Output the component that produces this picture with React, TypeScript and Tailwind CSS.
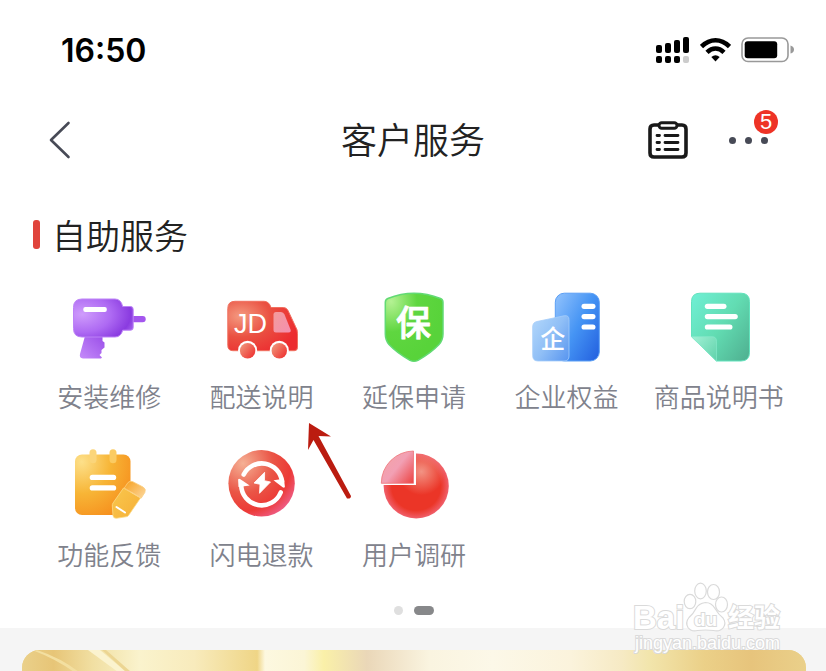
import type { ReactNode } from "react";

const CJK = "font-['Noto_Sans_CJK_SC',sans-serif]";

function Gradient({ id, colors }: { id: string; colors: string[] }) {
  return (
    <linearGradient id={id} x1="0" y1="0.1" x2="1" y2="0.9">
      {colors.map((color, i) => (
        <stop key={color} offset={i / (colors.length - 1)} stopColor={color} />
      ))}
    </linearGradient>
  );
}

function Icon({ children }: { children: ReactNode }) {
  return (
    <svg viewBox="0 0 80 80" className="size-20" aria-hidden="true">
      {children}
    </svg>
  );
}

function DrillIcon() {
  return (
    <Icon>
      <defs>
        <radialGradient id="drill" cx="0.15" cy="0.4" r="0.95">
          <stop offset="0" stopColor="#cf9cfc" />
          <stop offset="0.5" stopColor="#ae6af3" />
          <stop offset="0.85" stopColor="#8a3be0" />
          <stop offset="1" stopColor="#a866ee" />
        </radialGradient>
        <linearGradient id="drillHandle" x1="1" y1="0" x2="0" y2="1">
          <stop offset="0" stopColor="#9a4ee8" />
          <stop offset="1" stopColor="#c58bfa" />
        </linearGradient>
      </defs>
      <path
        d="M16 49h17.500v5l2 1.500v5l-3 2.500v3l-2 2 2.500 2.500-1 1H14q-4-.5-3-4.500z"
        fill="url(#drillHandle)"
      />
      <rect x="62" y="29" width="14.700" height="6.300" rx="3" fill="#a456ee" />
      <path
        d="M13 12h33q6 0 7.700 7.500h8q2.500 0 2.500 3v18q0 2.700-2.500 2.700h-8Q52 50 46 50H13q-8.500 0-8.500-8.500v-21Q4.500 12 13 12z"
        fill="url(#drill)"
        stroke="#bd83f7"
        strokeWidth="1"
      />
      <rect x="14.300" y="20" width="23.500" height="5" rx="2" fill="#fff" />
    </Icon>
  );
}

function TruckIcon() {
  return (
    <Icon>
      <defs>
        <radialGradient id="truck" cx="0.18" cy="0.3" r="0.85">
          <stop offset="0" stopColor="#f49a80" />
          <stop offset="0.5" stopColor="#ea5142" />
          <stop offset="1" stopColor="#ec2c30" />
        </radialGradient>
        <Gradient id="truckWindow" colors={["#f39b9c", "#f48fae"]} />
        <Gradient id="wheel" colors={["#f09a7e", "#ee2d2d"]} />
      </defs>
      <path
        d="M13 14.300h29q5 0 7 6.200h12.500q3 0 4.500 3l7.500 16q2 3 2 7v14q0 3.200-3.200 3.200H11q-5.200 0-5.200-5.200v-37q0-7.200 7.200-7.200z"
        fill="url(#truck)"
        stroke="#f0705f"
        strokeWidth="1"
      />
      <path
        d="M54 25h5q2.500 0 3.500 2.500l6 15q1 3-2 3H54q-2.500 0-2.500-2.500V27.500Q51.500 25 54 25z"
        fill="url(#truckWindow)"
      />
      <circle cx="25.600" cy="63.300" r="9.500" fill="#fff" />
      <circle cx="57.300" cy="63.300" r="9.500" fill="#fff" />
      <circle cx="25.600" cy="63.700" r="7.700" fill="url(#wheel)" />
      <circle cx="57.300" cy="63.700" r="7.700" fill="url(#wheel)" />
      <text
        x="12"
        y="46.300"
        fontSize="27"
        fill="#fff"
        className="font-['Liberation_Sans',sans-serif]"
      >
        JD
      </text>
    </Icon>
  );
}

function ShieldIcon() {
  return (
    <Icon>
      <defs>
        <radialGradient id="shield" cx="0.1" cy="0.12" r="0.9">
          <stop offset="0" stopColor="#b5f294" />
          <stop offset="0.5" stopColor="#5fd640" />
          <stop offset="1" stopColor="#58d33a" />
        </radialGradient>
      </defs>
      <path
        d="M40 6.200q13 0 26.500 5.300 2.500 1 2.500 4V47q0 6-4 10.500-8 8.500-21 15.800-4 2-8 0Q23 66 15 57.500 11.300 53 11.300 47V15.500q0-3 2.500-4Q27 6.200 40 6.200z"
        fill="url(#shield)"
        stroke="#62da74"
        strokeWidth="1.500"
      />
      <text
        x="39.500"
        y="49"
        textAnchor="middle"
        fontSize="35"
        fontWeight="500"
        fill="#fff"
        stroke="#fff"
        strokeWidth="0.800"
        strokeLinejoin="round"
        className={CJK}
      >
        保
      </text>
    </Icon>
  );
}

function CompanyIcon() {
  return (
    <Icon>
      <defs>
        <Gradient id="tower" colors={["#8cbffc", "#4594f4", "#2563e0"]} />
        <Gradient id="annex" colors={["#b0d6fb", "#90bff6", "#5c98f0"]} />
      </defs>
      <rect
        x="29.300"
        y="6.200"
        width="44"
        height="67.800"
        rx="9"
        fill="url(#tower)"
        stroke="#5b9ff5"
        strokeWidth="1"
      />
      <path
        d="M11 34.500l27-5.700q5-1 5 4V69q0 5-5 5H12q-5.300 0-5.300-5.300V40q0-4.700 4.300-5.500z"
        fill="url(#annex)"
        stroke="#a4cdfa"
        strokeWidth="0.800"
      />
      <text
        x="26.800"
        y="61"
        textAnchor="middle"
        fontSize="25"
        fontWeight="500"
        fill="#fff"
        className={CJK}
      >
        企
      </text>
      <g fill="#fff">
        <rect x="55.500" y="16.700" width="14" height="5.200" rx="2.600" />
        <rect x="55.500" y="27" width="14" height="5.200" rx="2.600" />
        <rect x="55.500" y="37.400" width="14" height="5.200" rx="2.600" />
      </g>
    </Icon>
  );
}

function ManualIcon() {
  return (
    <Icon>
      <defs>
        <Gradient id="manual" colors={["#6eeed2", "#62dcb2", "#50b292"]} />
        <Gradient id="manualFold" colors={["#9ff0d4", "#62d3ac"]} />
      </defs>
      <path
        d="M21 6.200h41q8.500 0 8.500 8.500V65.500q0 8.500-8.500 8.500H37.500L12.500 49.700v-35q0-8.500 8.500-8.500z"
        fill="url(#manual)"
        stroke="#62e3bd"
        strokeWidth="1"
      />
      <path
        d="M12.500 49.700H33q4.500 0 4.500 4.500v20z"
        fill="url(#manualFold)"
        stroke="#8cebce"
        strokeWidth="0.600"
      />
      <g fill="#fff">
        <rect x="25.800" y="16.700" width="21.700" height="5.200" rx="2.600" />
        <rect x="25.800" y="27" width="33" height="5.200" rx="2.600" />
        <rect x="25.800" y="37.400" width="27.700" height="5.200" rx="2.600" />
      </g>
    </Icon>
  );
}

function FeedbackIcon() {
  return (
    <Icon>
      <defs>
        <radialGradient id="pad" cx="0.12" cy="0.12" r="1.05">
          <stop offset="0" stopColor="#fde08a" />
          <stop offset="0.5" stopColor="#f7b536" />
          <stop offset="1" stopColor="#f68d1c" />
        </radialGradient>
        <Gradient id="pencil" colors={["#f9c64c", "#f6b038"]} />
        <Gradient id="eraser" colors={["#f7a324", "#fcd598"]} />
      </defs>
      <rect
        x="6"
        y="9.500"
        width="55.500"
        height="60.500"
        rx="7"
        fill="url(#pad)"
      />
      <rect x="20.500" y="4.300" width="7" height="14" rx="3.500" fill="#fbd57a" />
      <rect x="40.500" y="4.300" width="7" height="14" rx="3.500" fill="#fbcb62" />
      <rect x="20.700" y="29.700" width="26.500" height="5.400" rx="2.700" fill="#fff" />
      <rect x="20.700" y="40.200" width="26.500" height="5.400" rx="2.700" fill="#fff" />
      <path
        d="M54.500 43l17 10-12 17.500q-1 1.200-2.500 1.300l-9.500 1.500q-3 .3-3.500-2.500L43.300 61q-.2-1.500.7-3z"
        fill="url(#pencil)"
        stroke="#fbdb87"
        strokeWidth="0.800"
      />
      <path
        d="M59 37.500q2-2 4.500-1l10.500 5.500q3.500 2 1.800 5.500l-3.500 5.500-17-10z"
        fill="url(#eraser)"
        stroke="#fbcf80"
        strokeWidth="0.800"
      />
      <path d="M47.500 62l8.500 5.500" stroke="#fff" strokeWidth="2" strokeLinecap="round" />
    </Icon>
  );
}

function RefundIcon() {
  return (
    <Icon>
      <defs>
        <radialGradient id="refund" cx="0.22" cy="0.2" r="0.9">
          <stop offset="0" stopColor="#f5b094" />
          <stop offset="0.5" stopColor="#ea5546" />
          <stop offset="0.8" stopColor="#ec3a36" />
          <stop offset="1" stopColor="#ee5a80" />
        </radialGradient>
      </defs>
      <circle cx="39.600" cy="38.300" r="33.200" fill="url(#refund)" />
      <g fill="none" stroke="#fff" strokeWidth="4.600" strokeLinecap="round">
        <path d="M21.700 29.500A20.300 20.300 0 0 1 60 36.500" />
        <path d="M19.200 40A20.500 20.500 0 0 0 58.700 47.500" />
      </g>
      <path d="M51.500 35.200l10.500-1.500.9 8.300q-.8 1.200-2.300.2z" fill="#fff" />
      <path d="M16.500 42l-.4-7.500q.8-1.200 2.300-.2l9.300 6.200z" fill="#fff" />
      <path
        d="M42.600 27.300L32 38l6 1.300-.5 9L48.500 37l-6-1.300z"
        fill="#fff"
        stroke="#fff"
        strokeWidth="0.800"
        strokeLinejoin="round"
      />
    </Icon>
  );
}

function SurveyIcon() {
  return (
    <Icon>
      <defs>
        <radialGradient id="pieShine" cx="0.58" cy="0.28" r="0.36">
          <stop offset="0" stopColor="#f29384" />
          <stop offset="1" stopColor="#f29384" stopOpacity="0" />
        </radialGradient>
        <radialGradient id="pie">
          <stop offset="0" stopColor="#eb3527" />
          <stop offset="0.75" stopColor="#eb3527" />
          <stop offset="1" stopColor="#f0606c" />
        </radialGradient>
        <Gradient id="slice" colors={["#f4a3a6", "#f2a0b4", "#ed4a4a"]} />
      </defs>
      <circle cx="42.200" cy="41" r="32.600" fill="url(#pie)" />
      <circle cx="42.200" cy="41" r="32.600" fill="url(#pieShine)" />
      <path d="M42 40H5V4h37z" fill="#fff" />
      <path
        d="M39.500 38.300V6A32.500 32.300 0 0 0 7.300 38.300z"
        fill="url(#slice)"
        stroke="#ee7378"
        strokeWidth="0.800"
      />
    </Icon>
  );
}

const services = [
  { name: "安装维修", icon: <DrillIcon /> },
  { name: "配送说明", icon: <TruckIcon /> },
  { name: "延保申请", icon: <ShieldIcon /> },
  { name: "企业权益", icon: <CompanyIcon /> },
  { name: "商品说明书", icon: <ManualIcon /> },
  { name: "功能反馈", icon: <FeedbackIcon /> },
  { name: "闪电退款", icon: <RefundIcon /> },
  { name: "用户调研", icon: <SurveyIcon /> },
];

function StatusBar() {
  return (
    <div className="flex h-25 items-center justify-between pr-8 pl-[61px]">
      <span className="pt-0.5 font-['Inter',sans-serif] text-[32px] font-semibold text-black">
        16:50
      </span>
      <div className="flex items-center gap-2.5">
        <svg width="34" height="26" viewBox="0 0 34 26" aria-label="信号">
          <rect x="0" y="8" width="6" height="8" rx="2" />
          <rect x="9" y="6" width="6" height="10" rx="2" />
          <rect x="18" y="3" width="6" height="13" rx="2" />
          <rect x="27" y="0" width="6" height="16" rx="2" />
          <rect x="0" y="19" width="6" height="7" rx="2" />
          <rect x="9" y="19" width="6" height="7" rx="2" />
          <rect x="18" y="19" width="6" height="7" rx="2" />
          <rect x="27" y="19" width="6" height="7" rx="2" fill="#ccc" />
        </svg>
        <svg width="31" height="24" viewBox="0 0 31 24" aria-label="无线网络">
          <g fill="none" stroke="#000" strokeWidth="4.600">
            <path d="M1.500 8.500Q8 2.300 15.500 2.300T29.500 8.500" />
            <path d="M7 14.300q4-3.800 8.500-3.800t8.500 3.800" />
          </g>
          <path d="M11.300 19q4.200-3.300 8.400 0l-4.200 4.500z" />
        </svg>
        <svg width="53" height="26" viewBox="0 0 53 26" aria-label="电量">
          <rect
            x="1"
            y="1"
            width="46"
            height="23.500"
            rx="6"
            fill="#fff"
            stroke="#999"
            strokeWidth="1.600"
          />
          <rect x="3.700" y="4.300" width="32.500" height="17" rx="3" />
          <path d="M49.500 8.500q3.500 1 3.500 4t-3.500 4z" fill="#999" />
        </svg>
      </div>
    </div>
  );
}

function NavBar() {
  return (
    <header className="flex h-20 items-center px-14">
      <div className="flex flex-1">
        <button type="button" aria-label="返回" className="-ml-2">
          <svg width="24" height="38" viewBox="0 0 24 38" fill="none">
            <path
              d="M20.500 2L3 19l17.500 17"
              stroke="#474a56"
              strokeWidth="2.600"
              strokeLinecap="round"
              strokeLinejoin="round"
            />
          </svg>
        </button>
      </div>
      <h1 className="pb-1 text-4xl text-[#222]">客户服务</h1>
      <div className="flex flex-1 items-center justify-end gap-10">
        <button type="button" aria-label="订单">
          <svg width="40" height="38" viewBox="0 0 40 38" fill="none" stroke="#191919">
            <path
              d="M11 4H6Q2 4 2 8v24q0 4 4 4h28q4 0 4-4V8q0-4-4-4h-5"
              strokeWidth="3.600"
            />
            <rect x="11" y="1.800" width="18" height="5.400" rx="2.700" strokeWidth="3" />
            <path
              d="M9 14.500h2.500M17 14.500h13M9 21.500h2.500M17 21.500h13M9 28.500h2.500M17 28.500h13"
              strokeWidth="2.800"
              strokeLinecap="round"
            />
          </svg>
        </button>
        <button type="button" aria-label="更多" className="relative">
          <svg width="42" height="38" viewBox="0 0 42 38" fill="#474a56">
            <circle cx="4.500" cy="19.500" r="3.500" />
            <circle cx="20.500" cy="19.500" r="3.500" />
            <circle cx="36.500" cy="19.500" r="3.500" />
          </svg>
          <span className="absolute -top-[11px] -right-2 flex size-6 items-center justify-center rounded-full bg-[#ee3326] font-['Liberation_Sans',sans-serif] text-[22px] leading-6 text-white">
            5
          </span>
        </button>
      </div>
    </header>
  );
}

function Watermark() {
  return (
    <svg
      viewBox="0 0 160 84"
      className="pointer-events-none absolute right-9 bottom-3 w-40"
      aria-hidden="true"
    >
      <g fill="#fff" stroke="#dadada" strokeWidth="1.200">
        <ellipse cx="60" cy="25.500" rx="5.800" ry="7.200" />
        <ellipse cx="70.500" cy="15" rx="5.800" ry="7.800" />
        <ellipse cx="83.500" cy="16" rx="6" ry="7.500" />
        <ellipse cx="91.500" cy="28.500" rx="6" ry="7.500" />
        <path d="M75.500 26.500q6 0 9.500 6t8 9.500q3.500 5 .5 9.500-3.500 4.500-10 3-8-1-16 0-6.500 1.500-9.500-3-3-5 1-10 4.500-4 7-9t9.500-6z" />
        <g
          fontWeight="700"
          className="font-['Liberation_Sans',sans-serif]"
          paintOrder="stroke"
          strokeWidth="2"
        >
          <text x="3" y="53" fontSize="33">
            Bai
          </text>
          <text x="64" y="50" fontSize="19">
            du
          </text>
          <text x="98" y="51" fontSize="26" className={CJK}>
            经验
          </text>
        </g>
        <text
          x="5"
          y="73"
          fontSize="18"
          paintOrder="stroke"
          strokeWidth="2"
          className="font-['Liberation_Sans',sans-serif]"
        >
          jingyan.baidu.com
        </text>
      </g>
    </svg>
  );
}

function App() {
  return (
    <div className="relative flex min-h-screen flex-col bg-[#f5f5f5] font-['Noto_Sans_CJK_SC',sans-serif] font-[350]">
      <div className="bg-white pb-[13px]">
        <StatusBar />
        <NavBar />

        <section className="pt-[30px] pr-[31px] pl-[33px]">
          <h2 className="flex h-12 items-center gap-3 text-[34px] text-[#222]">
            <span className="h-[29px] w-[7px] rounded-[3px] bg-[#e0443c]" />
            自助服务
          </h2>
          <ul className="mt-[29px] grid grid-cols-5 gap-y-[31px]">
            {services.map((service) => (
              <li key={service.name} className="relative flex justify-center">
                <button
                  type="button"
                  className="flex flex-col items-center gap-[11px] text-[26px] leading-9 whitespace-nowrap text-[#80828c]"
                >
                  {service.icon}
                  {service.name}
                </button>
                {service.name === "配送说明" && (
                  <svg
                    viewBox="0 0 46 80"
                    className="pointer-events-none absolute top-full left-4/5 mt-2 w-[46px]"
                    aria-hidden="true"
                  >
                    <path
                      d="M2 1l22 13.500-12.500-.5L44 74q0 3-4 2.500L6.500 18 1 28z"
                      fill="#bb1c10"
                    />
                  </svg>
                )}
              </li>
            ))}
          </ul>
          <div className="mt-[34px] flex justify-center gap-[11px]">
            <span className="size-[9px] rounded-full bg-[#dfdfdf]" />
            <span className="h-[9px] w-5 rounded-full bg-[#87888a]" />
          </div>
        </section>
      </div>

      <div className="flex flex-1 flex-col pt-[22px] pr-5 pl-[22px]">
        <div className="flex min-h-5 flex-1 overflow-hidden rounded-t-[18px] bg-[#ecd48c]">
          <svg
            viewBox="0 0 784 22"
            preserveAspectRatio="none"
            className="w-full"
            aria-hidden="true"
          >
            <defs>
              <linearGradient id="silk">
                <stop offset="0" stopColor="#ead08a" />
                <stop offset="0.04" stopColor="#e7c577" />
                <stop offset="0.09" stopColor="#f1dfa2" />
                <stop offset="0.15" stopColor="#faf3cd" />
                <stop offset="0.22" stopColor="#f8ebbc" />
                <stop offset="0.3" stopColor="#efd586" />
                <stop offset="0.31" stopColor="#fdf8e0" />
                <stop offset="0.36" stopColor="#fbf5d6" />
                <stop offset="0.385" stopColor="#faf0a8" />
                <stop offset="0.44" stopColor="#ead7b8" />
                <stop offset="0.52" stopColor="#faf4e0" />
                <stop offset="0.6" stopColor="#fcf8e8" />
                <stop offset="0.7" stopColor="#fbf3dc" />
                <stop offset="0.765" stopColor="#f6eac4" />
                <stop offset="0.8" stopColor="#f2e5ac" />
                <stop offset="0.87" stopColor="#ebd088" />
                <stop offset="0.93" stopColor="#e7c47c" />
                <stop offset="1" stopColor="#ead08a" />
              </linearGradient>
            </defs>
            <rect width="784" height="22" fill="url(#silk)" />
            <path d="M15 0q24 8 42 22h-5Q34 9 10 0z" fill="#f3dfa0" />
            <path d="M66 0l30 22h8L78 0z" fill="#fbf3cf" />
            <path d="M80 0l24 22h5L84 0z" fill="#ecd592" />
          </svg>
        </div>
      </div>

      <Watermark />
    </div>
  );
}

export default App;
